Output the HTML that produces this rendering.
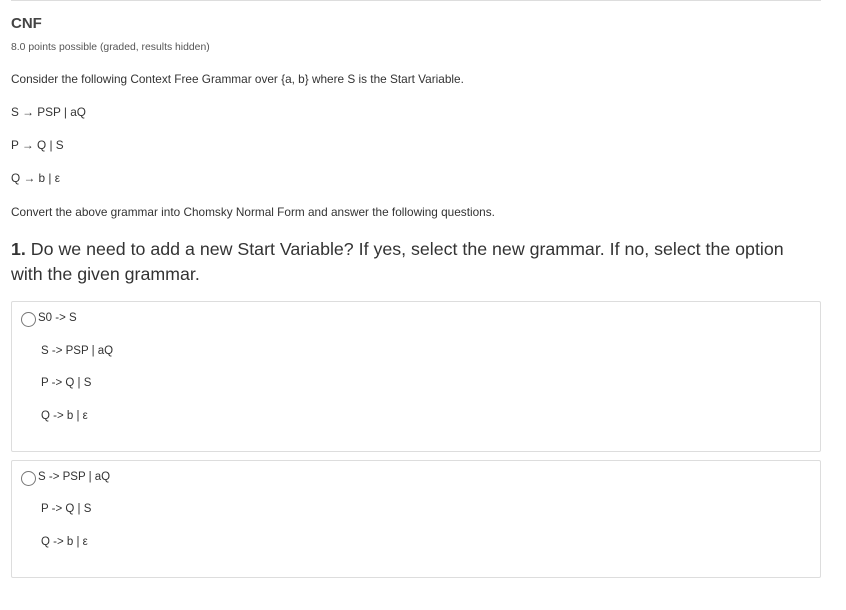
<!DOCTYPE html>
<html><head><style>
body{margin:0;background:#fff;font-family:"Liberation Sans",sans-serif;color:#333;width:846px;height:610px;overflow:hidden;position:relative}
.t{position:absolute;left:11px;white-space:nowrap;font-size:11.8px}
.line{position:absolute;left:11px;top:0;width:810px;height:1px;background:#ddd}
.box{position:absolute;left:11px;width:808px;border:1px solid #ddd;border-radius:2px}
.r{position:absolute;left:21px;width:15px;height:15px;border:1px solid #777;border-radius:50%;box-sizing:border-box}
.o{position:absolute;left:41px;font-size:11.5px;white-space:nowrap;color:#333}
</style></head><body>
<div class="line"></div>
<div class="t" style="top:15px;font-size:15px;font-weight:bold;color:#444">CNF</div>
<div class="t" style="top:42px;font-size:10.4px;color:#555">8.0 points possible (graded, results hidden)</div>
<div class="t" style="top:72px">Consider the following Context Free Grammar over {a, b} where S is the Start Variable.</div>
<div class="t" style="top:105px">S → PSP | aQ</div>
<div class="t" style="top:138px">P → Q | S</div>
<div class="t" style="top:171px">Q → b | ε</div>
<div class="t" style="top:205px">Convert the above grammar into Chomsky Normal Form and answer the following questions.</div>
<div class="t" style="top:237px;font-size:17.8px;line-height:25px;color:#333"><b>1.</b> Do we need to add a new Start Variable? If yes, select the new grammar. If no, select the option<br>with the given grammar.</div>
<div class="box" style="top:301px;height:149px"></div>
<div class="r" style="top:312px"></div>
<div class="o" style="top:312px;left:38px">S0 -&gt; S</div>
<div class="o" style="top:345px">S -&gt; PSP | aQ</div>
<div class="o" style="top:377px">P -&gt; Q | S</div>
<div class="o" style="top:410px">Q -&gt; b | ε</div>
<div class="box" style="top:460px;height:116px"></div>
<div class="r" style="top:471px"></div>
<div class="o" style="top:471px;left:38px">S -&gt; PSP | aQ</div>
<div class="o" style="top:503px">P -&gt; Q | S</div>
<div class="o" style="top:536px">Q -&gt; b | ε</div>
</body></html>
